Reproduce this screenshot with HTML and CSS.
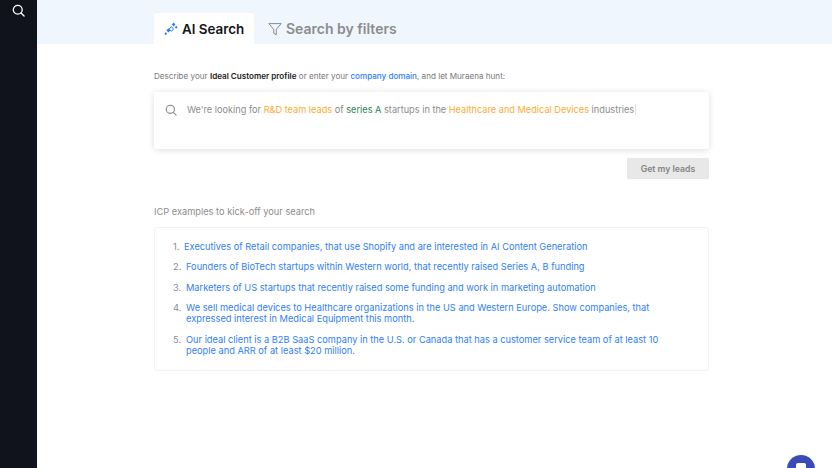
FILE: index.html
```html
<!DOCTYPE html>
<html lang="en">
<head>
<meta charset="utf-8">
<title>AI Search</title>
<link rel="stylesheet" href="styles.css">
</head>
<body>
<div class="app">
  <aside class="sidebar">
    <svg class="side-icon" width="13" height="13" viewBox="0 0 14 14" fill="none" stroke="#fff" stroke-width="1.4" stroke-linecap="round"><circle cx="6.2" cy="6.2" r="4.8"/><path d="M9.7 9.7 13 13"/></svg>
  </aside>
  <main class="main">
    <header class="tabbar">
      <div class="tabs">
        <div class="tab active">
          <svg class="tab-icon" width="14" height="14" viewBox="0 0 14 14" fill="#2f7df6"><path d="M9.6 .6 11.4 2.6 9.6 4.6 7.8 2.6Z M12.2 3.8 13.6 5.3 12.2 6.8 10.8 5.3Z M4.4 6.2 6.4 8.4 4.4 10.6 2.4 8.4Z M1.8 10.2 3.2 11.7 1.8 13.2.4 11.7Z"/><path d="M7.4 4.6 9.6 7 7.4 9.4 5.2 7Z" fill="none" stroke="#2f7df6"/></svg>
          <span>AI Search</span>
        </div>
        <div class="tab">
          <svg class="tab-icon" width="14" height="14" viewBox="0 0 14 14" fill="none" stroke="#8a8a8a" stroke-width="1" stroke-linejoin="round"><path d="M.8 1.6H13.2L8.3 7.4V12.8L5.7 11.2V7.4Z"/></svg>
          <span>Search by filters</span>
        </div>
      </div>
    </header>
    <section class="content">
      <p class="intro">Describe your <b>Ideal Customer profile</b> or enter your <span class="blue">company domain</span>, and let Muraena hunt:</p>
      <div class="search-box">
        <svg width="12" height="12" viewBox="0 0 14 14" fill="none" stroke="#8a8a8a" stroke-width="1.3" stroke-linecap="round"><circle cx="6.2" cy="6.2" r="4.8"/><path d="M9.7 9.7 13 13"/></svg>
        <p class="query">We're looking for <span class="orange">R&amp;D team leads</span> of <span class="green">series A</span> startups in the <span class="orange">Healthcare and Medical Devices</span> industries<span class="caret"></span></p>
      </div>
      <div class="actions"><button class="submit" type="button">Get my leads</button></div>
      <h2 class="examples-title">ICP examples to kick-off your search</h2>
      <ol class="examples">
        <li><span>Executives of Retail companies, that use Shopify and are interested in AI Content Generation</span></li>
        <li><span>Founders of BioTech startups within Western world, that recently raised Series A, B funding</span></li>
        <li><span>Marketers of US startups that recently raised some funding and work in marketing automation</span></li>
        <li><span>We sell medical devices to Healthcare organizations in the US and Western Europe. Show companies, that expressed interest in Medical Equipment this month.</span></li>
        <li><span>Our ideal client is a B2B SaaS company in the U.S. or Canada that has a customer service team of at least 10 people and ARR of at least $20 million.</span></li>
      </ol>
    </section>
  </main>
</div>
<div class="chat"><i></i></div>
</body>
</html>
```

FILE: styles.css
```css
* { box-sizing: border-box; }
html, body { margin: 0; height: 100%; overflow: hidden; }
body { font-family: Inter, "Liberation Sans", sans-serif; background: #fff; color: #8c8c8c; }
.app { display: flex; height: 468px; }
.sidebar { width: 37px; flex: none; background: #10121c; display: flex; justify-content: center; padding-top: 4px; }
.side-icon { display: block; }
.main { flex: 1; min-width: 0; }
.tabbar { height: 44px; background: #eff6fe; padding: 13px 0 0 117px; }
.tabs { display: flex; }
.tab { height: 31px; display: flex; align-items: center; gap: 4px; padding: 0 10px; font-size: 14px; font-weight: 600; color: #8c8c8c; white-space: nowrap; }
.tab-icon { flex: none; }
.tab.active { background: #fff; color: #14151c; border-radius: 3px 3px 0 0; width: 100px; font-size: 13.4px; }
.tab:not(.active) { padding-left: 14px; }
.content { width: 555px; margin-left: 117px; }
.intro { margin: 26px 0 0; height: 12px; font-size: 8.1px; line-height: 12px; color: #787878; white-space: nowrap; }
.intro b { font-weight: 600; color: #1c1c22; }
.blue { color: #2f80f5; font-weight: 500; }
.search-box { margin-top: 10px; height: 57px; background: #fff; border-radius: 2px; box-shadow: 0 1px 6px rgba(0,0,0,.14); display: flex; align-items: flex-start; gap: 10px; padding: 12px 11px; }
.query { margin: 0; font-size: 9.2px; line-height: 12px; color: #8c8c8c; white-space: nowrap; }
.orange { color: #fbab33; }
.green { color: #1f8552; }
.caret { display: inline-block; width: 1px; height: 11px; background: #e2e2e2; margin-left: 1px; vertical-align: -2px; }
.actions { display: flex; justify-content: flex-end; margin-top: 9px; }
.submit { width: 82px; height: 21px; border: 0; border-radius: 1px; background: #e8e8e8; color: #858585; font: 600 8.7px Inter, "Liberation Sans", sans-serif; padding: 0; }
.examples-title { margin: 27px 0 0; font-size: 9.25px; line-height: 12px; font-weight: 400; color: #8c8c8c; }
.examples { margin: 9px 0 0; height: 144px; border: 1px solid #f3f3f3; border-radius: 3px; padding: 13px 44px 0 18px; list-style: none; counter-reset: n; }
.examples li { counter-increment: n; display: flex; font-size: 9.25px; line-height: 11.2px; margin-bottom: 9.2px; color: #2f80f5; }
.examples li::before { content: counter(n) "."; flex: none; width: 13px; color: #8c8c8c; }
.examples li:first-child::before { width: 11px; }
.chat { position: fixed; left: 787px; top: 455px; width: 28px; height: 28px; border-radius: 50%; background: #3b4cb8; display: flex; justify-content: center; padding-top: 8px; }
.chat i { display: block; width: 10px; height: 10px; background: #fff; border-radius: 2px; }
```
